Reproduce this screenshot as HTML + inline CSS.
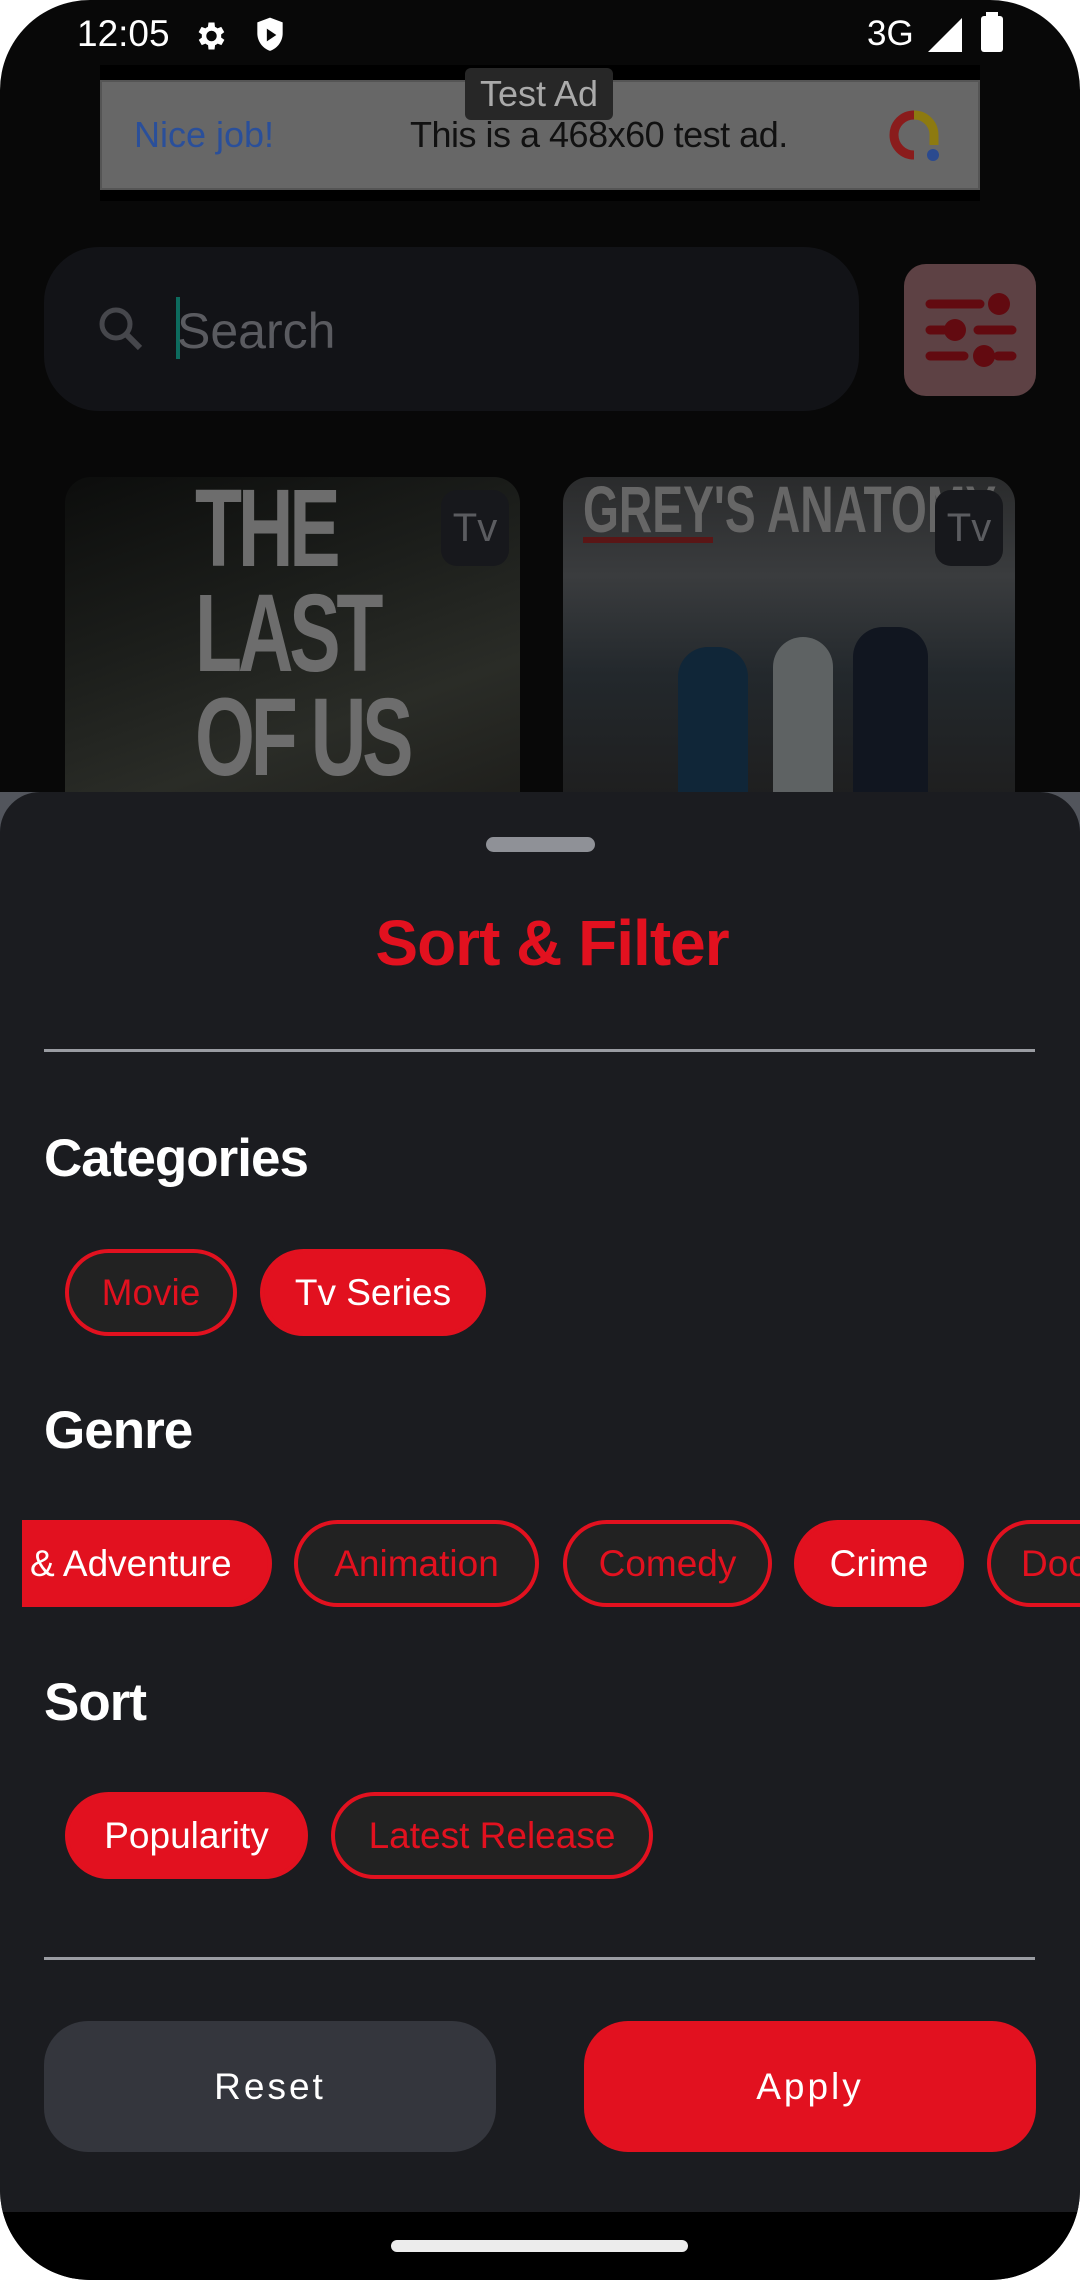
<!DOCTYPE html>
<html><head><meta charset="utf-8"><style>
*{margin:0;padding:0;box-sizing:border-box}
html,body{width:1080px;height:2280px;background:#fff;overflow:hidden}
.screen{position:absolute;left:0;top:0;width:1080px;height:2280px;background:#080808;border-radius:90px;overflow:hidden;font-family:"Liberation Sans",sans-serif}
.abs{position:absolute}
.sheet{position:absolute;left:0;top:792px;width:1080px;height:1420px;background:#1b1c20;border-radius:40px 40px 0 0}
.h{position:absolute;left:44px;color:#fff;font-weight:bold;font-size:53px;letter-spacing:-1px}
.chip{position:absolute;height:87px;border-radius:44px;font-size:37px;display:flex;align-items:center;justify-content:center;color:#e2111f;background:#222;border:4px solid #e2111f}
.chip.on{background:#e2111f;color:#fff}
.div{position:absolute;left:44px;width:991px;height:3px;background:#9a9ca2}
.btn{position:absolute;top:2021px;height:131px;width:452px;border-radius:44px;display:flex;align-items:center;justify-content:center;color:#fff;font-size:37px;letter-spacing:3px}
</style></head><body>
<div class="screen">
<div class="abs" style="left:77px;top:13px;color:#fff;font-size:37px">12:05</div>
<svg class="abs" style="left:190px;top:18px" width="40" height="36" viewBox="0 0 24 24"><path fill="#fff" d="M19.4 13a7.5 7.5 0 0 0 0-2l2.1-1.6-2-3.5-2.5 1a7 7 0 0 0-1.7-1L15 3h-4l-.4 2.9a7 7 0 0 0-1.7 1l-2.5-1-2 3.5L6.6 11a7.5 7.5 0 0 0 0 2l-2.1 1.6 2 3.5 2.5-1a7 7 0 0 0 1.7 1L11 21h4l.4-2.9a7 7 0 0 0 1.7-1l2.5 1 2-3.5zM13 15.5a3.5 3.5 0 1 1 0-7 3.5 3.5 0 0 1 0 7z"/></svg>
<svg class="abs" style="left:253px;top:16px" width="34" height="38" viewBox="0 0 20 24"><path fill="#fff" d="M10 1 2 4v7c0 5 3.4 9.6 8 11 4.6-1.4 8-6 8-11V4z"/><path fill="#080808" d="M8 8v8l6-4z"/></svg>
<div class="abs" style="left:867px;top:14px;color:#fff;font-size:35px">3G</div>
<svg class="abs" style="left:928px;top:18px" width="34" height="34"><path fill="#fff" d="M34 0V34H0z"/></svg>
<div class="abs" style="left:981px;top:16px;width:22px;height:36px;background:#fff;border-radius:3px"></div>
<div class="abs" style="left:986px;top:12px;width:12px;height:5px;background:#fff"></div>
<div class="abs" style="left:100px;top:65px;width:880px;height:136px;background:#000"></div>
<div class="abs" style="left:100px;top:80px;width:880px;height:110px;background:#676767;border:2px solid #555"></div>
<div class="abs" style="left:134px;top:114px;color:#2a4f9a;font-size:36px">Nice job!</div>
<div class="abs" style="left:410px;top:114px;color:#111;font-size:36px;letter-spacing:-0.5px">This is a 468x60 test ad.</div>
<svg class="abs" style="left:886px;top:107px" width="56" height="56" viewBox="0 0 56 56"><path d="M28 8a20 20 0 1 0 0 40" stroke="#8a1c1c" stroke-width="9" fill="none"/><path d="M28 8a20 20 0 0 1 20 20v10" stroke="#8d7a10" stroke-width="9" fill="none"/><circle cx="47" cy="48" r="6" fill="#2b4a8f"/></svg>
<div class="abs" style="left:465px;top:68px;width:148px;height:52px;background:#272727;border-radius:6px;color:#aaa;font-size:36px;text-align:center;line-height:52px">Test Ad</div>
<div class="abs" style="left:44px;top:247px;width:815px;height:164px;background:#121317;border-radius:55px"></div>
<svg class="abs" style="left:94px;top:302px" width="52" height="52" viewBox="0 0 52 52"><circle cx="22" cy="22" r="14" stroke="#46474c" stroke-width="5" fill="none"/><path d="M32 32l14 14" stroke="#46474c" stroke-width="6"/></svg>
<div class="abs" style="left:176px;top:297px;width:4px;height:62px;background:#0d6b5e"></div>
<div class="abs" style="left:177px;top:302px;color:#5a5b60;font-size:50px">Search</div>
<div class="abs" style="left:904px;top:264px;width:132px;height:132px;background:#5d4144;border-radius:22px"></div>
<svg class="abs" style="left:904px;top:264px" width="132" height="132"><g stroke="#620a10" stroke-width="9" stroke-linecap="round"><path d="M26 40h50M26 66h14M74 66h34M26 92h34M94 92h14"/></g><g fill="#620a10"><circle cx="95" cy="40" r="11"/><circle cx="51" cy="66" r="11"/><circle cx="80" cy="92" r="11"/></g></svg>
<div class="abs" style="left:65px;top:477px;width:455px;height:330px;border-radius:26px 26px 0 0;background:linear-gradient(160deg,#0c0d0c 0%,#1c1e1b 40%,#2a2c27 70%,#1e1e1b 100%);overflow:hidden">
<div class="abs" style="left:130px;top:0;color:#6d6d6d;font:bold 110px/0.95 'Liberation Sans',sans-serif;letter-spacing:-6px;transform:scaleX(.7);transform-origin:left">THE<br>LAST<br>OF US</div></div>
<div class="abs" style="left:563px;top:477px;width:452px;height:330px;border-radius:26px 26px 0 0;background:linear-gradient(180deg,#2a2b2c 0%,#3a3c3e 30%,#23282c 60%,#1e1e1e 100%);overflow:hidden">
<div class="abs" style="left:20px;top:-6px;color:#666;font:bold 66px 'Liberation Sans',sans-serif;transform:scaleX(.7);transform-origin:left;white-space:nowrap">GREY'S ANATOMY</div>
<div class="abs" style="left:20px;top:60px;width:130px;height:6px;background:#5a1616"></div>
<div class="abs" style="left:115px;top:170px;width:70px;height:170px;background:#102638;border-radius:30px 30px 0 0"></div>
<div class="abs" style="left:210px;top:160px;width:60px;height:180px;background:#5e6263;border-radius:30px 30px 0 0"></div>
<div class="abs" style="left:290px;top:150px;width:75px;height:190px;background:#111620;border-radius:30px 30px 0 0"></div></div>
<div class="abs" style="left:441px;top:490px;width:68px;height:76px;background:#17181c;border-radius:16px;color:#5b5c60;font-size:40px;text-align:center;line-height:76px">Tv</div>
<div class="abs" style="left:935px;top:490px;width:68px;height:76px;background:#17181c;border-radius:16px;color:#5b5c60;font-size:40px;text-align:center;line-height:76px">Tv</div>
<div class="abs" style="left:0;top:792px;width:1080px;height:60px;background:#52555c"></div>
<div class="sheet"></div>
<div class="abs" style="left:486px;top:837px;width:109px;height:15px;background:#8f9197;border-radius:8px"></div>
<div class="abs" style="left:0;top:906px;width:1104px;text-align:center;color:#e2111f;font-weight:bold;font-size:64px;letter-spacing:-1px">Sort &amp; Filter</div>
<div class="div" style="top:1049px"></div>
<div class="h" style="top:1128px">Categories</div>
<div class="chip" style="left:65px;top:1249px;width:172px">Movie</div>
<div class="chip on" style="left:260px;top:1249px;width:226px">Tv Series</div>
<div class="h" style="top:1400px">Genre</div>
<div class="chip on" style="left:22px;top:1520px;width:250px;border-radius:0 44px 44px 0;justify-content:flex-start;padding-left:4px">&amp; Adventure</div>
<div class="chip" style="left:294px;top:1520px;width:245px">Animation</div>
<div class="chip" style="left:563px;top:1520px;width:209px">Comedy</div>
<div class="chip on" style="left:794px;top:1520px;width:170px">Crime</div>
<div class="chip" style="left:987px;top:1520px;width:200px;justify-content:flex-start;padding-left:30px">Documentary</div>
<div class="h" style="top:1672px">Sort</div>
<div class="chip on" style="left:65px;top:1792px;width:243px">Popularity</div>
<div class="chip" style="left:331px;top:1792px;width:322px">Latest Release</div>
<div class="div" style="top:1957px"></div>
<div class="btn" style="left:44px;background:#34363d">Reset</div>
<div class="btn" style="left:584px;background:#e2111f">Apply</div>
<div class="abs" style="left:0;top:2212px;width:1080px;height:68px;background:#000"></div>
<div class="abs" style="left:391px;top:2240px;width:297px;height:12px;background:#ececec;border-radius:6px"></div>
</div>
</body></html>
